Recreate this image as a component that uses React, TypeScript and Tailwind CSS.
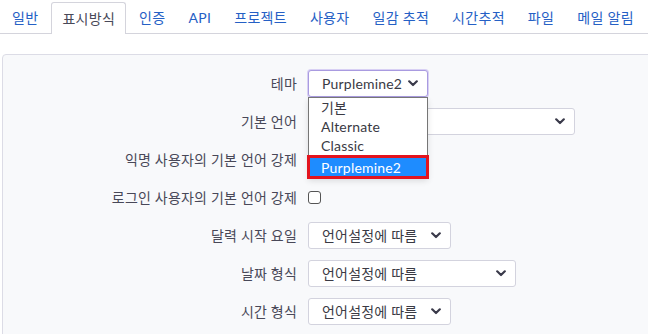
import React from 'react';

// ─── Data ────────────────────────────────────────────────────────────────────

const TABS = ['일반', '표시방식', '인증', 'API', '프로젝트', '사용자', '일감 추적', '시간추적', '파일', '메일 알림'];
const ACTIVE_TAB = '표시방식';
const THEMES = ['기본', 'Alternate', 'Classic', 'Purplemine2'];

const FONT = 'Lato, "Noto Sans CJK KR", sans-serif';

// ─── Chevron ─────────────────────────────────────────────────────────────────

function Chevron() {
  return (
    <svg width="10" height="7" viewBox="0 0 10 7" className="shrink-0">
      <path d="M1.2 1.3 L5 5 L8.8 1.3" fill="none" stroke="#3a3a4a" strokeWidth="2.2" strokeLinecap="round" strokeLinejoin="round" />
    </svg>
  );
}

// ─── Select (static) ─────────────────────────────────────────────────────────

function FakeSelect({ value, width, focused }: { value: string; width: string; focused?: boolean }) {
  return (
    <div
      className={`${width} h-[27px] flex items-center justify-between pl-[13px] pr-[9px] bg-white rounded-[3px] border text-[14px] text-[#3a3a44] tracking-[0.2px] ${
        focused ? 'border-[#a99be0] shadow-[0_0_0_1px_#d8d0f4]' : 'border-[#d3d3de]'
      }`}
    >
      <span className="truncate">{value}</span>
      <Chevron />
    </div>
  );
}

// ─── Row ─────────────────────────────────────────────────────────────────────

function Row({ label, children }: { label: string; children?: React.ReactNode }) {
  return (
    <div className="flex items-center h-[27px]">
      <div className="w-[294px] text-right text-[14px] tracking-[0.2px] text-[#484858] shrink-0">{label}</div>
      <div className="ml-[11px] relative flex items-center h-full">{children}</div>
    </div>
  );
}

// ─── Page ────────────────────────────────────────────────────────────────────

export default function App() {
  return (
    <div className="w-[648px] h-[334px] overflow-hidden bg-white" style={{ fontFamily: FONT }}>
      {/* Tabs */}
      <div className="flex items-end gap-[3px] h-[34px] border-b border-[#d4d4dc] pl-[2px]">
        {TABS.map(tab =>
          tab === ACTIVE_TAB ? (
            <div
              key={tab}
              className="h-[32px] -mb-px px-[10px] flex items-center bg-white border border-b-0 border-[#d4d4dc] rounded-t-[3px] text-[14px] tracking-[0.3px] text-[#484858]"
            >
              {tab}
            </div>
          ) : (
            <div key={tab} className="h-[32px] px-[10px] flex items-center text-[14px] tracking-[0.3px] text-[#2560c5]">
              {tab}
            </div>
          )
        )}
      </div>

      {/* Settings box */}
      <div className="mt-[20px] ml-[2px] w-[700px] h-[320px] bg-[#f8f9fb] border border-[#dcdce6] rounded-[4px] pt-[15px] flex flex-col gap-[11px]">
        <Row label="테마">
          <FakeSelect value="Purplemine2" width="w-[120px]" focused />
          {/* Open option list */}
          <div className="absolute left-0 top-[27px] w-[120px] bg-white border border-[#767676] shadow-[0_3px_6px_rgba(0,0,0,0.12)] z-10 text-[14px] text-[#3a3a44] tracking-[0.2px]">
            {THEMES.map(t =>
              t === 'Purplemine2' ? (
                <div key={t} className="h-[24px] -mx-[2px] -mb-[2px] border-[3px] border-[#e3141e] bg-[#1e8cff] text-white flex items-center pl-[11px]">
                  {t}
                </div>
              ) : (
                <div key={t} className="h-[19px] flex items-center pl-[12px]">
                  {t}
                </div>
              )
            )}
          </div>
        </Row>
        <Row label="기본 언어">
          <FakeSelect value="" width="w-[267px]" />
        </Row>
        <Row label="익명 사용자의 기본 언어 강제" />
        <Row label="로그인 사용자의 기본 언어 강제">
          <div className="w-[13px] h-[13px] border border-[#555] rounded-[3px] bg-white" />
        </Row>
        <Row label="달력 시작 요일">
          <FakeSelect value="언어설정에 따름" width="w-[143px]" />
        </Row>
        <Row label="날짜 형식">
          <FakeSelect value="언어설정에 따름" width="w-[208px]" />
        </Row>
        <Row label="시간 형식">
          <FakeSelect value="언어설정에 따름" width="w-[143px]" />
        </Row>
      </div>
    </div>
  );
}
